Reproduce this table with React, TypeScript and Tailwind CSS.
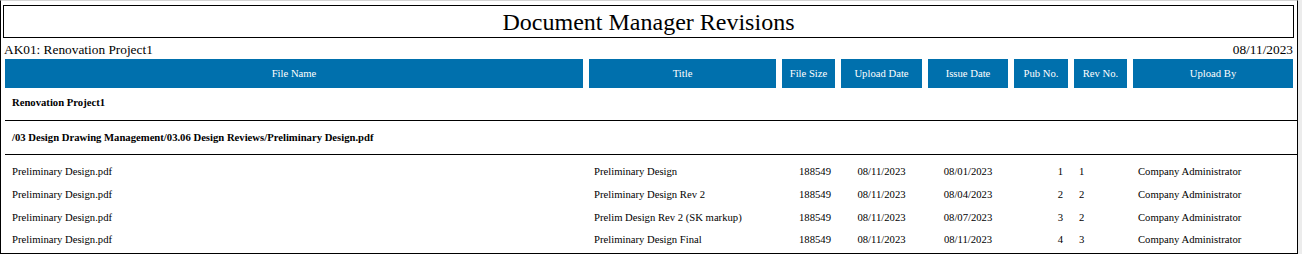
import React from 'react';

const cols = 'grid grid-cols-[578px_187px_53px_81px_80px_54px_53px_160px] gap-x-[6px]';

const headers = ['File Name', 'Title', 'File Size', 'Upload Date', 'Issue Date', 'Pub No.', 'Rev No.', 'Upload By'];

const rows = [
    { file: 'Preliminary Design.pdf', title: 'Preliminary Design', size: '188549', uploaded: '08/11/2023', issued: '08/01/2023', pub: '1', rev: '1', by: 'Company Administrator' },
    { file: 'Preliminary Design.pdf', title: 'Preliminary Design Rev 2', size: '188549', uploaded: '08/11/2023', issued: '08/04/2023', pub: '2', rev: '2', by: 'Company Administrator' },
    { file: 'Preliminary Design.pdf', title: 'Prelim Design Rev 2 (SK markup)', size: '188549', uploaded: '08/11/2023', issued: '08/07/2023', pub: '3', rev: '2', by: 'Company Administrator' },
    { file: 'Preliminary Design.pdf', title: 'Preliminary Design Final', size: '188549', uploaded: '08/11/2023', issued: '08/11/2023', pub: '4', rev: '3', by: 'Company Administrator' },
];

export default function App() {
    return (
        <div className="w-[1302px] h-[254px] flex bg-[#ececec]">
            <div className="w-[1298px] h-[254px] bg-white border border-black border-t-[#d4d4d4] font-['Liberation_Serif',serif] text-black overflow-hidden">
                {/* report title */}
                <div className="mt-[4px] ml-[2px] w-[1291px] h-[33px] border border-black flex items-center justify-center text-[24px]">
                    Document Manager Revisions
                </div>

                <div className="h-[21px] pt-[2px] pl-[3px] pr-[4px] flex items-center justify-between text-[10pt]">
                    <span>AK01: Renovation Project1</span>
                    <span>08/11/2023</span>
                </div>

                {/* column headers */}
                <div className={`${cols} ml-[4px] h-[29px]`}>
                    {headers.map((h) => (
                        <div key={h} className="bg-[#0070ad] text-white text-[8pt] flex items-center justify-center">
                            {h}
                        </div>
                    ))}
                </div>

                <div className="ml-[4px] w-[1292px] h-[33px] pb-[3px] pl-[7px] border-b border-black flex items-center text-[8pt] font-bold">
                    Renovation Project1
                </div>
                <div className="ml-[4px] w-[1292px] h-[34px] pl-[7px] border-b border-black flex items-center text-[8pt] font-bold">
                    /03 Design Drawing Management/03.06 Design Reviews/Preliminary Design.pdf
                </div>

                <div className="pt-[6px] ml-[4px] text-[8pt]">
                    {rows.map((r, i) => (
                        <div key={i} className={`${cols} h-[22.67px] items-center`}>
                            <div className="pl-[7px]">{r.file}</div>
                            <div className="pl-[5px]">{r.title}</div>
                            <div className="pr-[4px] text-right">{r.size}</div>
                            <div className="text-center">{r.uploaded}</div>
                            <div className="text-center">{r.issued}</div>
                            <div className="pr-[5px] text-right">{r.pub}</div>
                            <div className="pl-[5px]">{r.rev}</div>
                            <div className="pl-[5px]">{r.by}</div>
                        </div>
                    ))}
                </div>
            </div>
        </div>
    );
}
